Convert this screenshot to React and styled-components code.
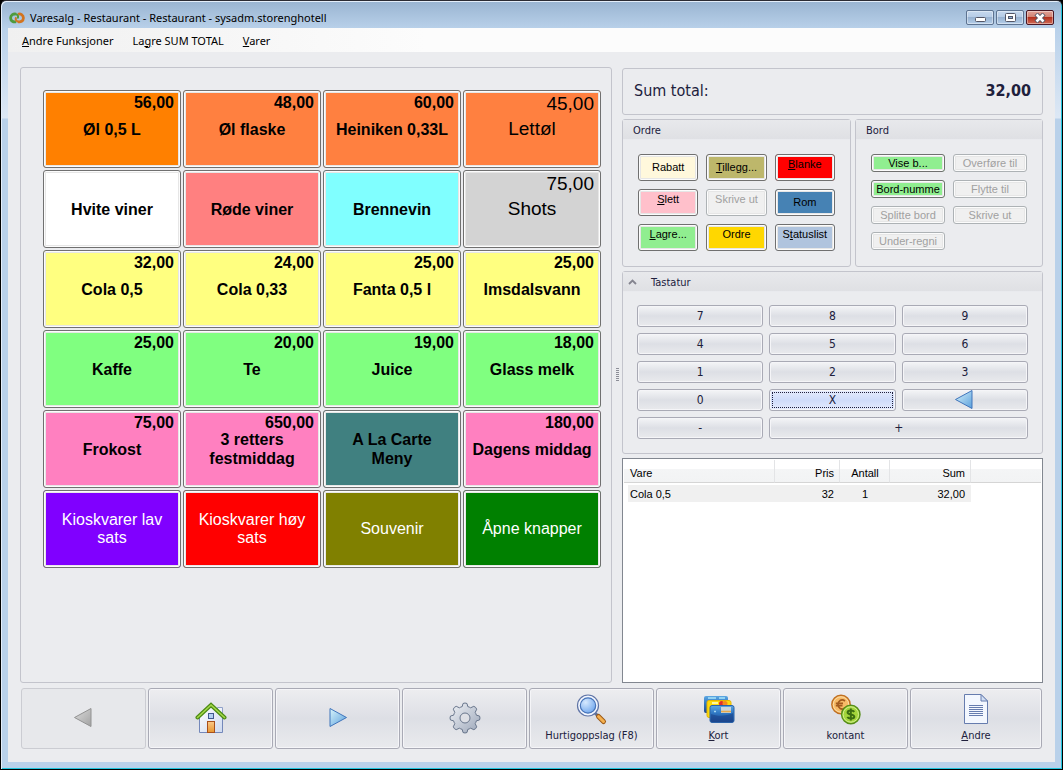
import React from 'react';
import styled, { createGlobalStyle, css } from 'styled-components';

const GlobalStyle = createGlobalStyle`
  * {
    box-sizing: border-box;
  }

  body {
    margin: 0;
    background: #000;
    font-family: 'DejaVu Sans Condensed', 'DejaVu Sans', sans-serif;
    font-size: 11px;
    color: #20203c;
  }

  button {
    margin: 0;
    padding: 0;
    font: inherit;
    color: inherit;
  }
`;

const products = [
  { name: 'Øl 0,5 L', price: '56,00', color: '#ff8000' },
  { name: 'Øl flaske', price: '48,00', color: '#ff8040' },
  { name: 'Heiniken 0,33L', price: '60,00', color: '#ff8040' },
  { name: 'Lettøl', price: '45,00', color: '#ff8040', look: 'large' },
  { name: 'Hvite viner', color: '#ffffff' },
  { name: 'Røde viner', color: '#ff8080' },
  { name: 'Brennevin', color: '#80ffff' },
  { name: 'Shots', price: '75,00', color: '#d3d3d3', look: 'large' },
  { name: 'Cola 0,5', price: '32,00', color: '#ffff80' },
  { name: 'Cola 0,33', price: '24,00', color: '#ffff80' },
  { name: 'Fanta 0,5 l', price: '25,00', color: '#ffff80' },
  { name: 'Imsdalsvann', price: '25,00', color: '#ffff80' },
  { name: 'Kaffe', price: '25,00', color: '#80ff80' },
  { name: 'Te', price: '20,00', color: '#80ff80' },
  { name: 'Juice', price: '19,00', color: '#80ff80' },
  { name: 'Glass melk', price: '18,00', color: '#80ff80' },
  { name: 'Frokost', price: '75,00', color: '#ff80c0' },
  { name: '3 retters festmiddag', price: '650,00', color: '#ff80c0' },
  { name: 'A La Carte Meny', color: '#408080' },
  { name: 'Dagens middag', price: '180,00', color: '#ff80c0' },
  { name: 'Kioskvarer lav sats', color: '#8000ff', look: 'light' },
  { name: 'Kioskvarer høy sats', color: '#ff0000', look: 'light' },
  { name: 'Souvenir', color: '#808000', look: 'light' },
  { name: 'Åpne knapper', color: '#008000', look: 'light' },
];

const orderActions = [
  { label: 'Rabatt', color: '#fff8dc' },
  { label: 'Tillegg...', hotkey: 0, color: '#bdb76b' },
  { label: 'Blanke', hotkey: 0, color: '#ff0000', raised: true },
  { label: 'Slett', hotkey: 0, color: '#ffc0cb', raised: true },
  { label: 'Skrive ut', disabled: true, raised: true },
  { label: 'Rom', color: '#4682b4' },
  { label: 'Lagre...', hotkey: 0, color: '#90ee90', raised: true },
  { label: 'Ordre', color: '#ffd700', raised: true },
  { label: 'Statuslist', hotkey: 1, color: '#b0c4de', raised: true },
];

const tableActions = [
  { label: 'Vise b...', color: '#90ee90' },
  { label: 'Overføre til', disabled: true },
  { label: 'Bord-numme', color: '#90ee90' },
  { label: 'Flytte til', disabled: true },
  { label: 'Splitte bord', disabled: true },
  { label: 'Skrive ut', disabled: true },
  { label: 'Under-regni', disabled: true },
];

const keys = ['7', '8', '9', '4', '5', '6', '1', '2', '3', '0', 'X', 'back', '-', '+'];

const orderLines = [{ name: 'Cola 0,5', price: '32', count: '1', sum: '32,00' }];

const Label = ({ text, hotkey }) =>
  hotkey === undefined ? (
    text
  ) : (
    <>
      {text.slice(0, hotkey)}
      <u>{text[hotkey]}</u>
      {text.slice(hotkey + 1)}
    </>
  );

const LogoIcon = () => (
  <svg width="16" height="14" viewBox="0 0 16 14" fill="none" strokeWidth="2.800">
    <path d="M7 10.600C4.500 11.600 1.600 9.800 1.600 7C1.600 4 4.500 2.400 7 3.200" stroke="#4f9a3c" />
    <path d="M9 3.200C11.500 2.200 14.400 4 14.400 7C14.400 10 11.500 11.400 9 10.600" stroke="#d3741f" />
    <path d="M6.500 3C9.500 3.600 9.600 6 8.400 7.500" stroke="#4f9a3c" strokeWidth="2" />
    <path d="M9.500 10.800C6.500 10.200 6.200 8 7.200 6.400" stroke="#d3741f" strokeWidth="2" />
  </svg>
);

const ArrowIcon = ({ direction, muted }) => {
  const id = `arrow-${direction}-${muted ? 'muted' : 'blue'}`;
  return (
    <svg width="20" height="20" viewBox="0 0 20 20">
      <defs>
        <linearGradient id={id} x1="0" y1="0" x2="1" y2="1">
          <stop offset="0" stopColor={muted ? '#dcdcdc' : '#d8f4fb'} />
          <stop offset="1" stopColor={muted ? '#a2a2a2' : '#5a9fdc'} />
        </linearGradient>
      </defs>
      <path
        d={direction === 'left' ? 'M17 0.500V18.500L0.500 9.500Z' : 'M2 0.500V18.500L18.500 9.500Z'}
        fill={`url(#${id})`}
        stroke={muted ? '#929292' : '#3f74bb'}
        strokeWidth="1"
      />
    </svg>
  );
};

const HomeIcon = () => (
  <svg width="32" height="32" viewBox="0 0 32 32">
    <defs>
      <linearGradient id="home-wall" x1="0" y1="0" x2="1" y2="1">
        <stop offset="0" stopColor="#ffffff" />
        <stop offset="1" stopColor="#ced9ef" />
      </linearGradient>
      <linearGradient id="home-door" x1="0" y1="0" x2="0" y2="1">
        <stop offset="0" stopColor="#fbc98a" />
        <stop offset="1" stopColor="#e8962f" />
      </linearGradient>
    </defs>
    <path d="M22.500 5.500H27.500V14H22.500Z" fill="#eef2fa" stroke="#8fa0c8" />
    <path d="M4.500 15L16 4L27.500 15V30.500H4.500Z" fill="url(#home-wall)" stroke="#7488ba" />
    <path d="M2.500 15.500L16 3L29.500 15.500" fill="none" stroke="#4b8a12" strokeWidth="4" strokeLinecap="round" />
    <path d="M2.500 15.500L16 3L29.500 15.500" fill="none" stroke="#a5d84b" strokeWidth="1.600" strokeLinecap="round" />
    <rect x="13.500" y="11.500" width="5" height="5" fill="#b4d0f3" stroke="#41598f" />
    <rect x="12.500" y="19.500" width="7" height="11" fill="url(#home-door)" stroke="#a8501c" />
  </svg>
);

const GearIcon = () => (
  <svg width="32" height="32" viewBox="0 0 32 32">
    <defs>
      <linearGradient id="gear-body" x1="0" y1="0" x2="1" y2="1">
        <stop offset="0" stopColor="#f1f3f7" />
        <stop offset="1" stopColor="#9aa5b8" />
      </linearGradient>
    </defs>
    <path
      fillRule="evenodd"
      d="M14 1.500Q16 0.500 18 1.500L18.800 4.600Q20.300 5 21.600 5.800L24.800 4.300Q27 5 27.700 7.200L26.200 10.400Q27 11.700 27.400 13.200L30.500 14Q31.500 16 30.500 18L27.400 18.800Q27 20.300 26.200 21.600L27.700 24.800Q27 27 24.800 27.700L21.600 26.200Q20.300 27 18.800 27.400L18 30.500Q16 31.500 14 30.500L13.200 27.400Q11.700 27 10.400 26.200L7.200 27.700Q5 27 4.300 24.800L5.800 21.600Q5 20.300 4.600 18.800L1.500 18Q0.500 16 1.500 14L4.600 13.200Q5 11.700 5.800 10.400L4.300 7.200Q5 5 7.200 4.300L10.400 5.800Q11.700 5 13.200 4.600ZM16 11A5 5 0 1 0 16 21A5 5 0 1 0 16 11Z"
      fill="url(#gear-body)"
      stroke="#69768c"
      strokeLinejoin="round"
    />
  </svg>
);

const SearchIcon = () => (
  <svg width="32" height="32" viewBox="0 0 32 32">
    <defs>
      <radialGradient id="lens" cx="0.350" cy="0.300" r="0.800">
        <stop offset="0" stopColor="#d6e9ff" />
        <stop offset="1" stopColor="#6ba3ec" />
      </radialGradient>
    </defs>
    <path d="M18.500 18.500L22.500 22.500" stroke="#5f6f94" strokeWidth="3" />
    <path d="M22.500 22.500L27.500 27.500" stroke="#9c5a17" strokeWidth="5" strokeLinecap="round" />
    <path d="M22.500 22.500L27.500 27.500" stroke="#f4b04f" strokeWidth="3" strokeLinecap="round" />
    <circle cx="12" cy="11.500" r="10.500" fill="#f3f7ff" stroke="#5f74a6" strokeWidth="1.200" />
    <circle cx="12" cy="11.500" r="7.700" fill="url(#lens)" stroke="#4673b8" strokeWidth="1.200" />
  </svg>
);

const CardsIcon = () => (
  <svg width="32" height="32" viewBox="0 0 32 32">
    <defs>
      <linearGradient id="card-blue" x1="0" y1="0" x2="0" y2="1">
        <stop offset="0" stopColor="#5da7e2" />
        <stop offset="0.450" stopColor="#2f77c3" />
        <stop offset="1" stopColor="#1c468c" />
      </linearGradient>
    </defs>
    <rect x="1" y="2" width="24" height="17" rx="2" fill="url(#card-blue)" />
    <path d="M5 4H13M16 4H22" stroke="#92d2f2" strokeWidth="2" />
    <rect x="4" y="6.500" width="24" height="17" rx="2" fill="#fcd90a" stroke="#e5b400" />
    <path d="M9 9H15" stroke="#fff6a0" strokeWidth="2" />
    <circle cx="18.500" cy="9.500" r="2.500" fill="#e0302b" />
    <circle cx="22" cy="9.500" r="2.500" fill="#f58a1f" />
    <rect x="7" y="11.500" width="24" height="17" rx="2" fill="url(#card-blue)" stroke="#2a62a8" />
    <path d="M8 20C15 23 24 22 30 19V26C30 28 29 28 28 28H9C8 28 8 27 8 26Z" fill="#1b438a" opacity="0.600" />
    <rect x="18" y="13" width="10" height="6" fill="#c9d6dc" />
    <path d="M18 17.500H28" stroke="#e7a94b" strokeWidth="1.600" />
    <path d="M11 17.500H13M12 16.500V18.500" stroke="#a5d8f2" />
  </svg>
);

const CoinsIcon = () => (
  <svg width="32" height="32" viewBox="0 0 32 32" fill="none">
    <circle cx="11" cy="10.500" r="9.200" fill="#f7bb67" stroke="#c07022" strokeWidth="1.400" />
    <circle cx="11" cy="10.500" r="7.700" stroke="#fbdca6" />
    <path d="M15 7C11.500 4.500 8 7 8 10.500S11.500 16.500 15 14M5.800 9.300H13M5.800 11.700H12.500" stroke="#a35b1e" strokeWidth="1.700" />
    <circle cx="20.800" cy="20.500" r="9.200" fill="#a4d53b" stroke="#568d18" strokeWidth="1.400" />
    <circle cx="20.800" cy="20.500" r="7.700" stroke="#d2ef8f" />
    <path d="M24.300 17.800C23 16 17.600 16 17.600 18.400C17.600 20.800 24.300 20 24.300 22.700C24.300 25 18.700 25.200 17.300 23M20.800 14.500V26.500" stroke="#3c6d10" strokeWidth="2" />
  </svg>
);

const PageIcon = () => (
  <svg width="32" height="32" viewBox="0 0 32 32">
    <path d="M4.500 0.500H21L27.500 7V29.500H4.500Z" fill="#f3f7fe" stroke="#667cae" />
    <path d="M21 0.500V7H27.500Z" fill="#d2dff4" stroke="#667cae" />
    <path d="M9 11.500H23M9 13.500H23M9 15.500H23M9 17.500H23M9 19.500H23M9 21.500H23" stroke="#667cae" />
  </svg>
);

const navItems = [
  { name: 'Forrige', icon: <ArrowIcon direction="left" muted />, disabled: true },
  { name: 'Hjem', icon: <HomeIcon /> },
  { name: 'Neste', icon: <ArrowIcon direction="right" /> },
  { name: 'Innstillinger', icon: <GearIcon /> },
  { label: 'Hurtigoppslag (F8)', icon: <SearchIcon /> },
  { label: 'Kort', hotkey: 0, icon: <CardsIcon /> },
  { label: 'kontant', icon: <CoinsIcon /> },
  { label: 'Andre', hotkey: 0, icon: <PageIcon /> },
];

const App = () => (
  <>
    <GlobalStyle />
    <Window>
      <TitleBar>
        <LogoIcon />
        <WindowTitle>Varesalg - Restaurant - Restaurant - sysadm.storenghotell</WindowTitle>
        <WindowButton aria-label="Minimer">
          <svg width="11" height="10" viewBox="0 0 11 10">
            <rect x="0.500" y="4.500" width="10" height="4" rx="1" fill="#fff" stroke="#535666" />
          </svg>
        </WindowButton>
        <WindowButton aria-label="Maksimer">
          <svg width="11" height="10" viewBox="0 0 11 10">
            <rect x="0.500" y="0.500" width="10" height="8" rx="1" fill="#fff" stroke="#535666" />
            <rect x="3.500" y="3.500" width="4" height="2" fill="#8fb0d6" stroke="#535666" />
          </svg>
        </WindowButton>
        <WindowButton $close aria-label="Lukk">
          <svg width="12" height="10" viewBox="0 0 12 10">
            <path d="M2 1L10 9M10 1L2 9" stroke="#535666" strokeWidth="4.400" />
            <path d="M2.500 1.500L9.500 8.500M9.500 1.500L2.500 8.500" stroke="#fff" strokeWidth="2.600" />
          </svg>
        </WindowButton>
      </TitleBar>
      <MenuBar>
        <MenuItem><Label text="Andre Funksjoner" hotkey={0} /></MenuItem>
        <MenuItem><Label text="Lagre SUM TOTAL" hotkey={2} /></MenuItem>
        <MenuItem><Label text="Varer" hotkey={0} /></MenuItem>
      </MenuBar>
      <Content>
        <Workspace>
          <ProductPanel>
            <ProductGrid>
              {products.map((product) => (
                <ProductButton key={product.name} $color={product.color} $look={product.look}>
                  {product.price && <Price>{product.price}</Price>}
                  <ProductName>{product.name}</ProductName>
                </ProductButton>
              ))}
            </ProductGrid>
          </ProductPanel>
          <Splitter>
            <Grip />
          </Splitter>
          <SideColumn>
            <TotalPanel>
              <span>Sum total:</span>
              <TotalAmount>32,00</TotalAmount>
            </TotalPanel>
            <GroupRow>
              <Panel>
                <PanelHeader>Ordre</PanelHeader>
                <OrderGrid>
                  {orderActions.map((action) => (
                    <ActionButton
                      key={action.label}
                      $color={action.color}
                      $raised={action.raised}
                      disabled={action.disabled}
                    >
                      <Label text={action.label} hotkey={action.hotkey} />
                    </ActionButton>
                  ))}
                </OrderGrid>
              </Panel>
              <Panel>
                <PanelHeader>Bord</PanelHeader>
                <TableGrid>
                  {tableActions.map((action) => (
                    <ActionButton key={action.label} $color={action.color} disabled={action.disabled}>
                      {action.label}
                    </ActionButton>
                  ))}
                </TableGrid>
              </Panel>
            </GroupRow>
            <Panel>
              <PanelHeader>
                <Chevron width="9" height="6" viewBox="0 0 9 6">
                  <path d="M1 5L4.500 1.500L8 5" fill="none" stroke="#84848f" strokeWidth="1.800" />
                </Chevron>
                Tastatur
              </PanelHeader>
              <Keypad>
                {keys.map((key) =>
                  key === 'back' ? (
                    <Key key={key} aria-label="Slett siste">
                      <ArrowIcon direction="left" />
                    </Key>
                  ) : (
                    <Key key={key} $active={key === 'X'} $wide={key === '+'}>
                      {key}
                    </Key>
                  )
                )}
              </Keypad>
            </Panel>
            <OrderList>
              <OrderTable>
                <colgroup>
                  <NameCol />
                  <PriceCol />
                  <CountCol />
                  <SumCol />
                  <col />
                </colgroup>
                <thead>
                  <tr>
                    <HeadCell>Vare</HeadCell>
                    <HeadCell $align="right">Pris</HeadCell>
                    <HeadCell $align="center">Antall</HeadCell>
                    <HeadCell $align="right">Sum</HeadCell>
                    <HeadCell $last />
                  </tr>
                </thead>
                <tbody>
                  {orderLines.map((line) => (
                    <tr key={line.name}>
                      <Cell>{line.name}</Cell>
                      <Cell $align="right">{line.price}</Cell>
                      <Cell $align="center">{line.count}</Cell>
                      <Cell $align="right">{line.sum}</Cell>
                    </tr>
                  ))}
                </tbody>
              </OrderTable>
            </OrderList>
          </SideColumn>
        </Workspace>
        <BottomBar>
          {navItems.map((item) => (
            <NavButton key={item.label || item.name} aria-label={item.name} disabled={item.disabled}>
              {item.icon}
              {item.label && (
                <span>
                  <Label text={item.label} hotkey={item.hotkey} />
                </span>
              )}
            </NavButton>
          ))}
        </BottomBar>
      </Content>
    </Window>
  </>
);

const Window = styled.div`
  display: flex;
  flex-direction: column;
  min-height: 100vh;
  padding: 0 7px 7px 6px;
  border: 1px solid #000;
  border-top-color: #2b2b33;
  border-radius: 6px 6px 0 0;
  background: linear-gradient(#99b4d1, #b9d1ea 28px, #dde8f5 117px, #b9d1ea 118px);
  box-shadow: inset 1px 1px 0 #e4eefa, inset -1px -1px 0 #1fc4dd;
`;

const TitleBar = styled.header`
  display: flex;
  align-items: center;
  gap: 2px;
  height: 27px;
  padding: 6px 1px 0 2px;
`;

const WindowTitle = styled.h1`
  flex: 1;
  margin: 0;
  padding-left: 3px;
  font: 11px 'Noto Sans', sans-serif;
  color: #000;
`;

const WindowButton = styled.button`
  display: flex;
  align-items: center;
  justify-content: center;
  width: 28px;
  height: 15px;
  border: 1px solid ${({ $close }) => ($close ? '#4a1622' : '#5d7391')};
  border-radius: 2px;
  background: ${({ $close }) =>
    $close
      ? 'linear-gradient(#e2a297, #cf8070 50%, #b5321f 50%, #cf6a55)'
      : 'linear-gradient(#c5d8ee, #b5cbe5 50%, #98b3d2 50%, #b4cde8)'};
  box-shadow: inset 0 0 0 1px rgba(255, 255, 255, 0.4);
`;

const MenuBar = styled.nav`
  display: flex;
  gap: 7px;
  height: 24px;
  margin-left: 1px;
  padding-left: 8px;
  background: linear-gradient(90deg, #f0f0f0, #fcfcfc 40%);
`;

const MenuItem = styled.button`
  padding: 0 6px;
  border: none;
  background: none;
  font: 11px 'Noto Sans', sans-serif;
  color: #000;
`;

const Content = styled.main`
  display: flex;
  flex: 1;
  flex-direction: column;
  gap: 5px;
  margin-left: 1px;
  padding: 15px 12px 13px;
  background: #ebecef;
`;

const Workspace = styled.div`
  display: grid;
  flex: 1;
  grid-template-columns: minmax(0, 1fr) 10px 421px;
`;

const Panel = styled.section`
  border: 1px solid #c3c4cc;
  border-radius: 3px;
`;

const ProductPanel = styled(Panel)`
  padding: 22px 10px 22px 22px;
`;

const ProductGrid = styled.div`
  display: grid;
  grid-template-columns: repeat(4, minmax(0, 1fr));
  grid-auto-rows: 78px;
  gap: 2px;
`;

const buttonFace = css`
  border: 1px solid #707070;
  border-radius: 3px;
  box-shadow: inset 0 0 0 1px #fcfcfc, inset 0 0 0 2px #e6e6e6;
  background: ${({ $color }) => $color};
  color: #000;
`;

const looks = {
  large: css`
    font-size: 19px;
    font-weight: normal;
    line-height: 22px;
  `,
  light: css`
    font-weight: normal;
    line-height: 18px;
    color: #fff;
  `,
};

/* Price and name share one cell so that the name stays centred under the price */
const ProductButton = styled.button`
  ${buttonFace}
  display: grid;
  padding: 2px 6px;
  font: bold 16px/19px 'Liberation Sans', Arial, sans-serif;
  ${({ $look }) => looks[$look]}
`;

const Price = styled.span`
  grid-area: 1 / 1;
  place-self: start end;
`;

const ProductName = styled.span`
  grid-area: 1 / 1;
  place-self: center;
  padding: 0 1px;
`;

const Splitter = styled.div`
  display: flex;
  align-items: center;
  justify-content: center;
`;

const Grip = styled.span`
  width: 3px;
  height: 14px;
  background: repeating-linear-gradient(#8d8e98 0 1px, transparent 1px 2px);
`;

const SideColumn = styled.div`
  display: flex;
  flex-direction: column;
  gap: 4px;
  padding-top: 1px;
`;

const TotalPanel = styled(Panel)`
  display: flex;
  align-items: center;
  justify-content: space-between;
  height: 47px;
  padding: 0 11px 3px;
  font-size: 16px;
`;

const TotalAmount = styled.output`
  font-weight: bold;
`;

const GroupRow = styled.div`
  display: grid;
  grid-template-columns: 229px 1fr;
  gap: 4px;
  height: 148px;
`;

const PanelHeader = styled.h2`
  display: flex;
  align-items: center;
  height: 20px;
  margin: 0;
  padding: 1px 10px 0;
  border-bottom: 1px solid #e9eaee;
  background: linear-gradient(#e8e9ec, #dfe0e4);
  font-size: 11px;
  font-weight: normal;
`;

const Chevron = styled.svg`
  margin: 0 14px 0 -5px;
`;

const OrderGrid = styled.div`
  display: grid;
  grid-template-columns: repeat(3, 1fr);
  grid-auto-rows: 27px;
  gap: 8px;
  padding: 14px 15px;
`;

const TableGrid = styled.div`
  display: grid;
  grid-template-columns: repeat(2, 74px);
  grid-auto-rows: 18px;
  gap: 8px;
  padding: 14px 15px;
`;

const ActionButton = styled.button`
  ${buttonFace}
  overflow: hidden;
  padding-bottom: ${({ $raised }) => ($raised ? '7px' : '1px')};
  font: 11px/12px 'Liberation Sans', Arial, sans-serif;
  white-space: nowrap;

  &:disabled {
    border-color: #adb2b5;
    background: #f0f0f0;
    color: #a0a0a0;
  }
`;

const Keypad = styled.div`
  display: grid;
  grid-template-columns: repeat(3, 1fr);
  grid-auto-rows: 22px;
  gap: 6px;
  padding: 13px 14px 14px;
`;

const Key = styled.button`
  display: flex;
  align-items: center;
  justify-content: center;
  grid-column: span ${({ $wide }) => ($wide ? 2 : 1)};
  border: 1px solid #a9aab5;
  border-radius: 3px;
  background: ${({ $active }) =>
    $active ? 'linear-gradient(#e6ecfc, #cfdcfa 50%, #e4ebfd)' : 'linear-gradient(#f4f5f7, #dddfe5 50%, #e9eaed)'};
  box-shadow: inset 0 0 0 1px #f5f5f8;
  outline: ${({ $active }) => ($active ? '1px dotted #20203c' : 'none')};
  outline-offset: -4px;
  font-size: 12px;
`;

const OrderList = styled.div`
  flex: 1;
  padding: 1px;
  border: 1px solid #828790;
  background: #fff;
`;

const OrderTable = styled.table`
  width: 100%;
  table-layout: fixed;
  border-spacing: 0;
  font: 11px/15px 'Liberation Sans', Arial, sans-serif;
  color: #000;
`;

const NameCol = styled.col`
  width: 151px;
`;

const PriceCol = styled.col`
  width: 65px;
`;

const CountCol = styled.col`
  width: 50px;
`;

const SumCol = styled.col`
  width: 81px;
`;

const HeadCell = styled.th`
  height: 23px;
  padding: 4px 5px 0 6px;
  border-right: ${({ $last }) => ($last ? 'none' : '1px solid #e3e4e6')};
  border-bottom: 1px solid #d5d5d5;
  background: linear-gradient(#fff 40%, #f4f5f6 41%, #f2f3f4);
  font-weight: normal;
  text-align: ${({ $align = 'left' }) => $align};
`;

const Cell = styled.td`
  height: 21px;
  padding: 2px 6px 0;
  background: linear-gradient(#fff 2px, #f0f0f0 2px 19px, #fff 19px);
  text-align: ${({ $align = 'left' }) => $align};

  &:first-child {
    padding-left: 2px;
    border-left: 4px solid #fff;
  }
`;

const BottomBar = styled.footer`
  display: grid;
  grid-template-columns: repeat(7, 125fr) 132fr;
  gap: 2px;
  height: 61px;
  padding: 0 1px;
`;

const NavButton = styled.button`
  display: flex;
  flex-direction: column;
  align-items: center;
  justify-content: center;
  gap: 3px;
  padding-bottom: 1px;
  border: 1px solid #a9aab5;
  border-radius: 3px;
  background: linear-gradient(#ededf0, #dddfe5 50%, #e9eaed);
  box-shadow: inset 0 0 0 1px #f5f5f8;

  &:disabled {
    border-color: #cbccd2;
    background: #e7e8eb;
    box-shadow: none;
  }
`;

export default App;
